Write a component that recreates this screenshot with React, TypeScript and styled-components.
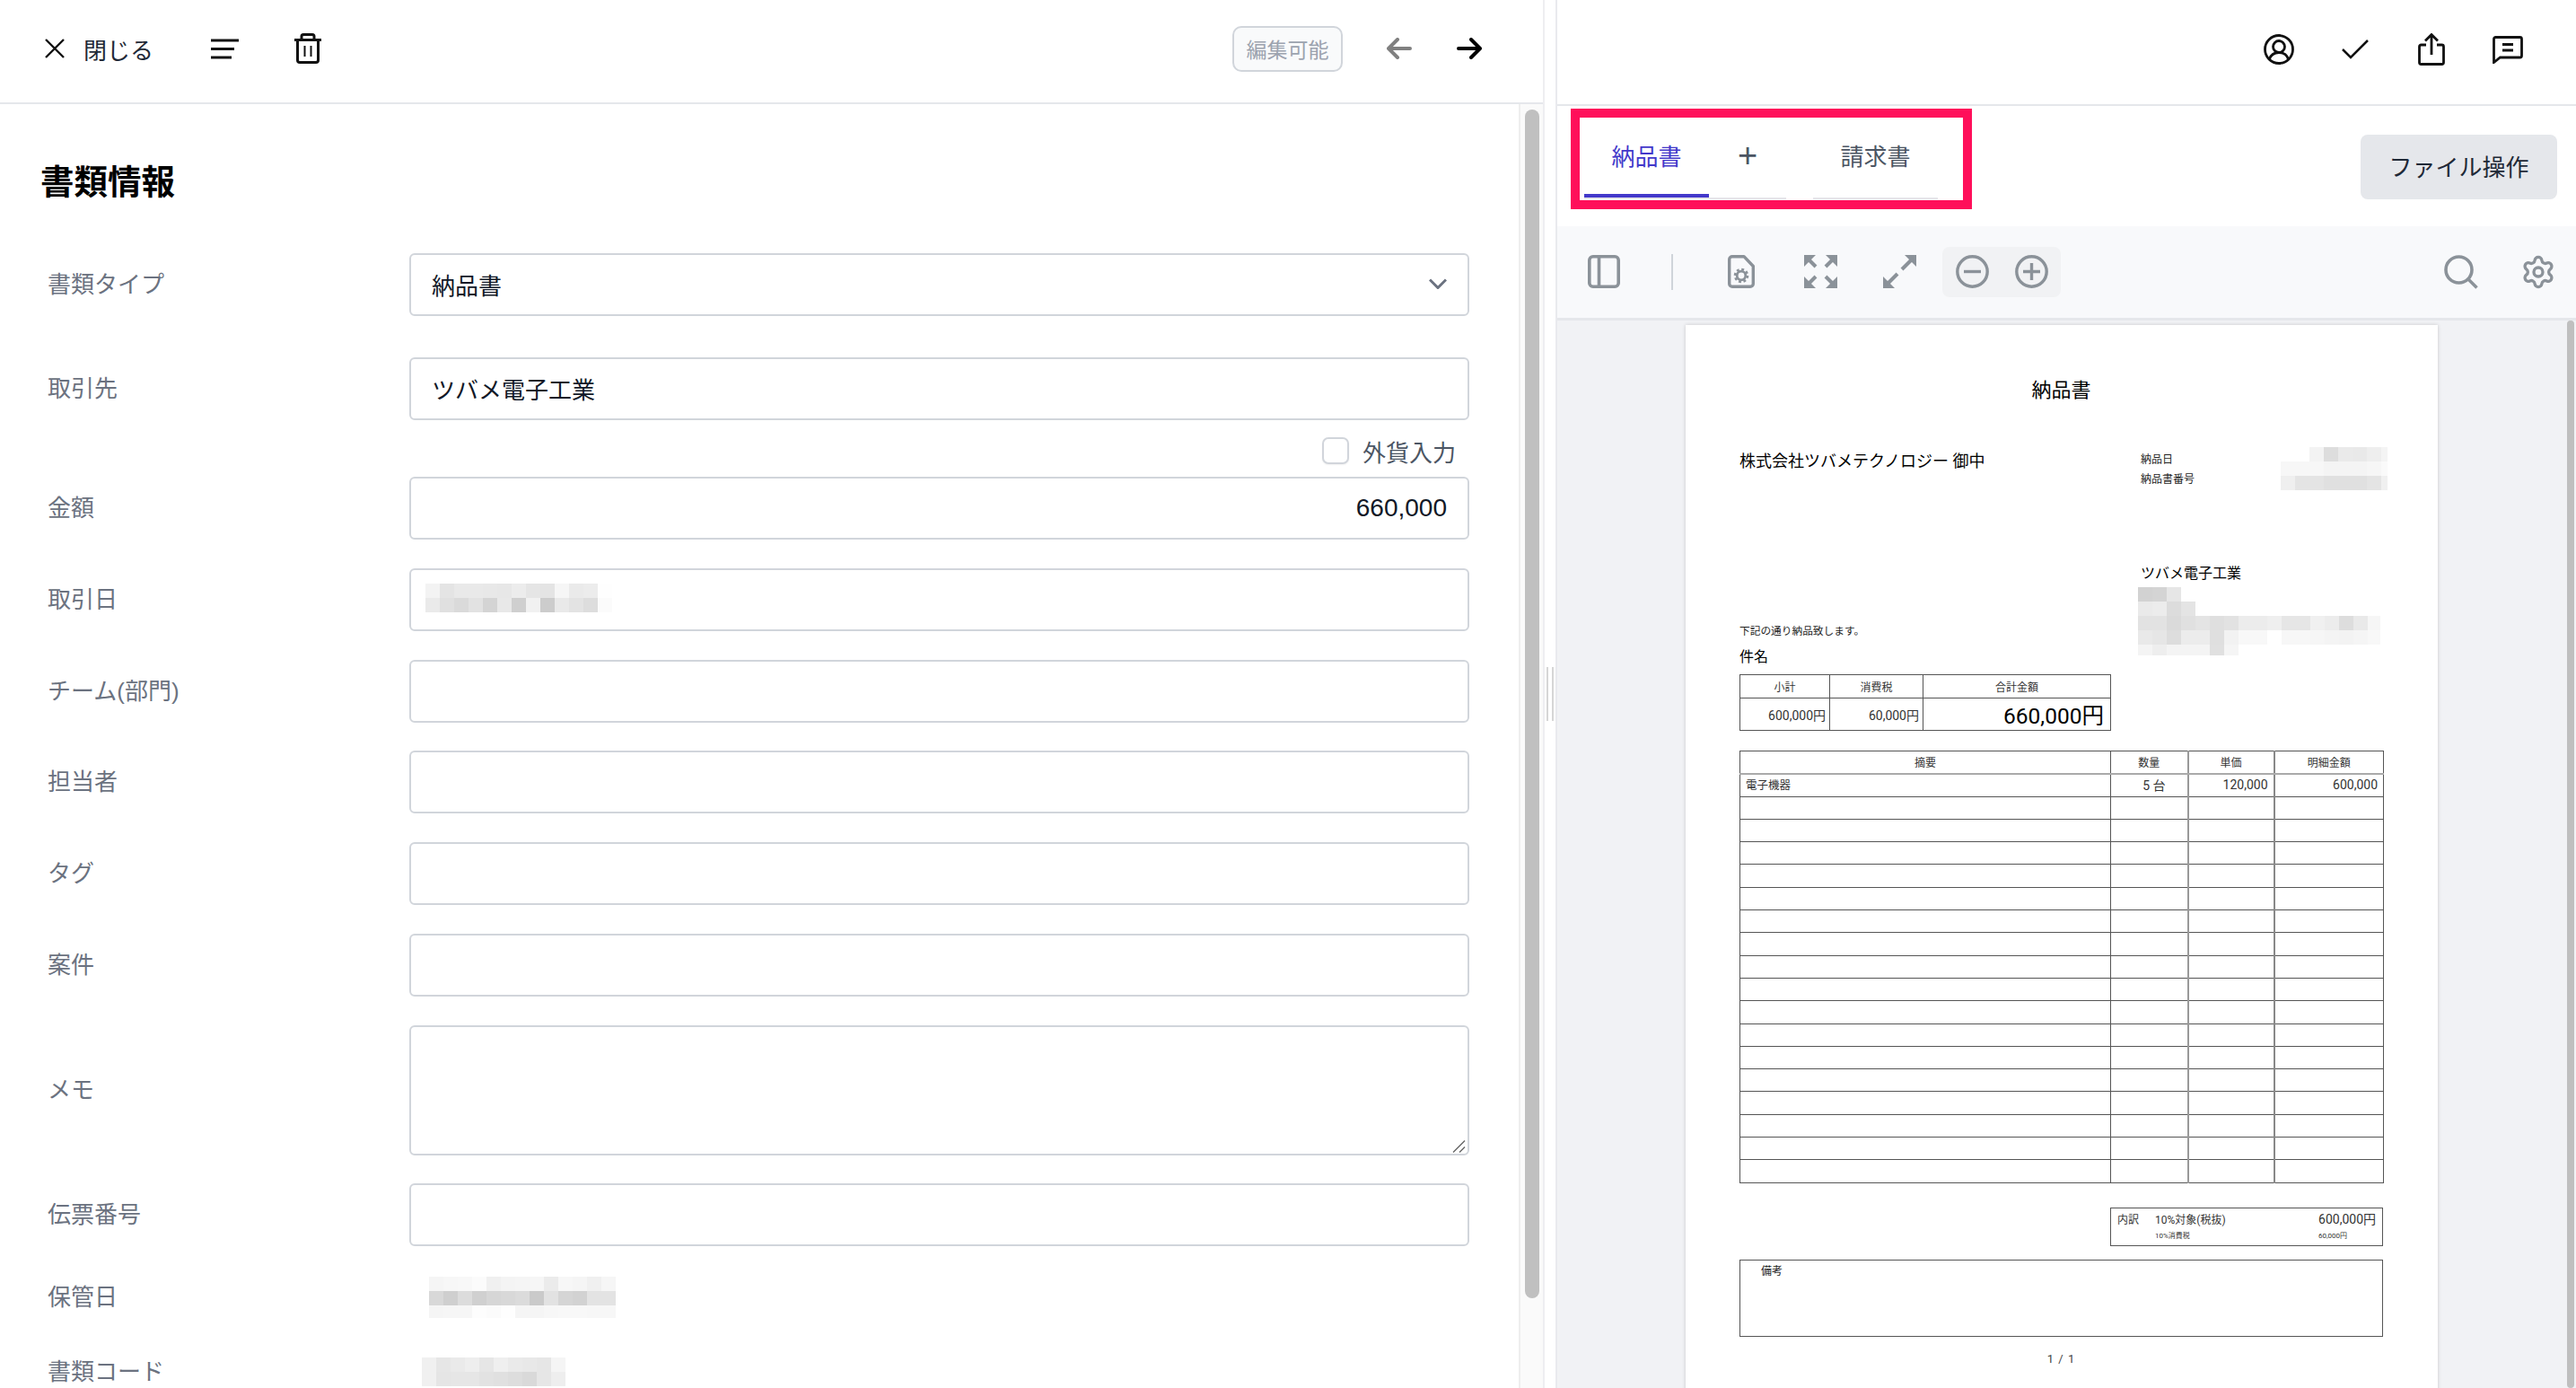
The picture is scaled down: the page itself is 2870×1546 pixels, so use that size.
import * as React from 'react';
import styled, { createGlobalStyle } from 'styled-components';
import { Settings } from 'lucide-react';

const GlobalStyle = createGlobalStyle`
  html, body {
    margin: 0;
    padding: 0;
    background: #fff;
  }
  body {
    font-family: "Liberation Sans", "Noto Sans CJK JP", sans-serif;
    color: #111827;
  }
  * {
    box-sizing: border-box;
  }
`;

// gray levels of the pixelated (masked) parts, ff = nothing there
const DATE_CELLS = [
  'f3 e4 e9 e9 e8 e7 ec e5 e4 f6 ea ec fe',
  'ea e0 da e2 d4 e8 cf f1 cc e9 e3 dd fb',
];
const STORED_CELLS = [
  'f5 f7 f8 fb f0 f4 f5 f6 eb f7 f5 f0 f6',
  'd8 cf dc d0 d6 d8 db ca e2 d5 d2 e3 e3',
  'f5 f6 f6 fd fb fe f5 f5 f7 f8 f8 f7 f7',
];
const CODE_CELLS = [
  'f0 e6 ea ee e6 ef ea e8 e6 f5',
  'f0 e5 e6 e6 e2 e0 dd d9 e6 ee',
];
const DOC_META_CELLS = [
  'ff ff f3 dd ea e9 ee f4',
  'f7 f7 f7 f4 f4 f4 f6 fa',
  'ef e4 e4 e0 e0 e0 e4 f0',
];
const DOC_ADDRESS_CELLS = [
  'd2 d4 e6 ff ff ff ff ff ff ff ff ff ff ff ff ff ff',
  'ea ec dc e4 ff ff ff ff ff ff ff ff ff ff ff ff ff',
  'e2 e2 da e0 e4 df e2 ec ec ef e6 e6 f0 ec dd e9 f6',
  'e9 e6 dd ec ec df f2 f8 f8 ff f7 f7 f6 f4 f3 f5 f8',
  'f4 ee f4 f4 f4 e0 f5 ff ff ff ff ff ff ff ff ff ff',
];

const Mosaic = ({ rows, width, height }: { rows: string[]; width?: number; height?: number }) => {
  const cells = rows.map((r) => r.split(' '));
  return (
    <svg
      width={width ?? cells[0].length * 16}
      height={height ?? cells.length * 16}
      shapeRendering='crispEdges'
      style={{ display: 'block' }}
    >
      {cells.map((row, y) =>
        row.map((c, x) =>
          c === 'ff' ? null : <rect key={`${x}-${y}`} x={x * 16} y={y * 16} width='16' height='16' fill={`#${c}${c}${c}`} />
        )
      )}
    </svg>
  );
};

const CloseIcon = () => (
  <svg width='22' height='22' viewBox='0 0 22 22' fill='none' stroke='#111' strokeWidth='2.4'>
    <path d='M1 1l20 20M21 1L1 21' />
  </svg>
);

const MenuIcon = () => (
  <svg width='31' height='23' viewBox='0 0 31 23' fill='none' stroke='#111' strokeWidth='3'>
    <path d='M0 2h31M0 11.500h26M0 21h23' />
  </svg>
);

const TrashIcon = () => (
  <svg width='30' height='34' viewBox='0 0 30 34' fill='none' stroke='#111' strokeWidth='3'>
    <path d='M0 7.500h30M8 7V3.500A2 2 0 0 1 10 1.500h10a2 2 0 0 1 2 2V7' />
    <path d='M3.500 8v22a2.500 2.500 0 0 0 2.500 2.500h18a2.500 2.500 0 0 0 2.500-2.500V8' />
    <path d='M11.500 14v12M18.500 14v12' strokeWidth='2' />
  </svg>
);

const ArrowIcon = ({ left, color }: { left?: boolean; color: string }) => (
  <svg width='28' height='24' viewBox='0 0 28 24' fill='none' stroke={color} strokeWidth='4' strokeLinecap='round' strokeLinejoin='round'>
    {left ? <path d='M26 12H3M12 2L2 12l10 10' /> : <path d='M2 12h23M16 2l10 10-10 10' />}
  </svg>
);

const ChevronIcon = () => (
  <svg width='20' height='12' viewBox='0 0 20 12' fill='none' stroke='#6b7280' strokeWidth='3'>
    <path d='M1 1.500l9 9 9-9' />
  </svg>
);

const ResizeGrip = () => (
  <svg width='15' height='14' viewBox='0 0 15 14' fill='none' stroke='#666' strokeWidth='1.400'>
    <path d='M1 13.500L14 .5M8 13.500L14 7.500' />
  </svg>
);

const UserIcon = () => (
  <svg width='34' height='34' viewBox='0 0 34 34' fill='none' stroke='#111' strokeWidth='2.800'>
    <circle cx='17' cy='17' r='15.500' />
    <circle cx='17' cy='14' r='6.500' />
    <path d='M6.500 28c1.500-5 5-7.500 10.500-7.500S26 23 27.500 28' />
  </svg>
);

const CheckIcon = () => (
  <svg width='30' height='22' viewBox='0 0 30 22' fill='none' stroke='#111' strokeWidth='2.500'>
    <path d='M1 11l9 9L29 1' />
  </svg>
);

const ShareIcon = () => (
  <svg width='30' height='36' viewBox='0 0 30 36' fill='none' stroke='#111' strokeWidth='2.800'>
    <path d='M9 13H3.500A2 2 0 0 0 1.500 15v17.500a2 2 0 0 0 2 2h23a2 2 0 0 0 2-2V15a2 2 0 0 0-2-2H21' />
    <path d='M15 24V2M8 8.500L15 1.500l7 7' />
  </svg>
);

const ChatIcon = () => (
  <svg width='34' height='31' viewBox='0 0 34 31' fill='none' stroke='#111' strokeWidth='2.800'>
    <path d='M3.500 1.500h27a2 2 0 0 1 2 2V22a2 2 0 0 1-2 2H8.500L1.500 29.500V3.500a2 2 0 0 1 2-2z' />
    <path d='M11 9.500h12M11 16h12' />
  </svg>
);

const SidebarIcon = () => (
  <svg width='36' height='37' viewBox='0 0 36 37' fill='none' stroke='#8b9299' strokeWidth='3.600'>
    <rect x='1.800' y='1.800' width='32.400' height='33.400' rx='4' />
    <path d='M12.500 2v33' />
  </svg>
);

const DocGearIcon = () => (
  <svg width='30' height='37' viewBox='0 0 30 37' fill='none' stroke='#8b9299' strokeWidth='3.400'>
    <path d='M18 1.700H5A3.300 3.300 0 0 0 1.700 5v27A3.300 3.300 0 0 0 5 35.300h20a3.300 3.300 0 0 0 3.300-3.300V12.500z' strokeLinejoin='round' />
    <circle cx='15' cy='23' r='4.800' strokeWidth='2.800' />
    <circle cx='15' cy='23' r='7' strokeWidth='2.600' strokeDasharray='2.900 2.600' />
  </svg>
);

const Corner = ({ transform, stem }: { transform?: string; stem: number }) => (
  <g transform={transform}>
    <path d='M0 0H13L0 13Z' fill='#8b9299' />
    <path d={`M4 4L${stem} ${stem}`} stroke='#8b9299' strokeWidth='4' />
  </g>
);

const FitIcon = () => (
  <svg width='37' height='37' viewBox='0 0 37 37' fill='none'>
    <Corner stem={13} />
    <Corner stem={13} transform='translate(37 0) scale(-1 1)' />
    <Corner stem={13} transform='translate(0 37) scale(1 -1)' />
    <Corner stem={13} transform='translate(37 37) scale(-1 -1)' />
  </svg>
);

const ExpandIcon = () => (
  <svg width='37' height='37' viewBox='0 0 37 37' fill='none'>
    <Corner stem={16} transform='translate(37 0) scale(-1 1)' />
    <Corner stem={16} transform='translate(0 37) scale(1 -1)' />
  </svg>
);

const ZoomIcon = ({ plus }: { plus?: boolean }) => (
  <svg width='37' height='37' viewBox='0 0 37 37' fill='none' stroke='#8b9299' strokeWidth='3.400'>
    <circle cx='18.500' cy='18.500' r='16.700' />
    <path d={plus ? 'M9 18.500h19M18.500 9v19' : 'M9 18.500h19'} />
  </svg>
);

const SearchIcon = () => (
  <svg width='38' height='38' viewBox='0 0 38 38' fill='none' stroke='#8b9299' strokeWidth='3.600'>
    <circle cx='16.500' cy='16.500' r='14.500' />
    <path d='M27 27l9.500 9.500' />
  </svg>
);

const Shell = styled.div`
  display: flex;
  width: 100vw;
  height: 100vh;
  overflow: hidden;
`;

const LeftPanel = styled.section`
  display: flex;
  flex-direction: column;
  width: 1721px;
  flex: none;
  border-right: 2px solid #eeeef1;
`;

const TopBar = styled.header`
  display: flex;
  align-items: center;
  height: 116px;
  flex: none;
  padding: 0 43px 6px 50px;
  border-bottom: 2px solid #e5e7eb;
`;

const CloseButton = styled.div`
  display: flex;
  align-items: center;
  gap: 21px;
  font-size: 26px;
  color: #1f2937;
`;

const BarIcon = styled.div<{ $left: number }>`
  display: flex;
  margin-left: ${(p) => p.$left}px;
`;

const EditBadge = styled.div`
  display: flex;
  align-items: center;
  justify-content: center;
  width: 123px;
  height: 51px;
  margin-left: auto;
  margin-right: 24px;
  font-size: 23px;
  color: #9ca3af;
  background: #f9fafb;
  border: 2px solid #d1d5db;
  border-radius: 10px;
`;

const ArrowButton = styled.div`
  display: flex;
  align-items: center;
  justify-content: center;
  width: 78px;
`;

const LeftBody = styled.div`
  display: flex;
  flex: 1;
  min-height: 0;
`;

const Form = styled.div`
  flex: 1;
  min-width: 0;
  overflow: hidden;
  padding: 57px 55px 0 46px;
`;

const Title = styled.h1`
  margin: 0 0 49px -1px;
  font-size: 37.500px;
  line-height: 60px;
  font-weight: 700;
  color: #000;
`;

const Row = styled.div<{ $top?: number }>`
  display: grid;
  grid-template-columns: 410px 1fr;
  align-items: center;
  margin-top: ${(p) => p.$top ?? 31.8}px;
`;

const Label = styled.div`
  padding-left: 7px;
  font-size: 26px;
  line-height: 32px;
  color: #6b7280;
`;

const Field = styled.div<{ $height?: number; $amount?: boolean }>`
  position: relative;
  display: flex;
  align-items: center;
  justify-content: ${(p) => (p.$amount ? 'flex-end' : 'space-between')};
  height: ${(p) => p.$height ?? 70}px;
  padding: 0 23px ${(p) => (p.$amount ? 0 : 2)}px;
  font-size: ${(p) => (p.$amount ? 28 : 26)}px;
  color: #111827;
  background: #fff;
  border: 2px solid #d1d5db;
  border-radius: 6px;
`;

const FieldMosaic = styled.div`
  margin: -2px 0 0 -7px;
`;

const GripSlot = styled.div`
  position: absolute;
  right: 2px;
  bottom: 1px;
  display: flex;
`;

const PlainValue = styled.div<{ $indent: number }>`
  padding-left: ${(p) => p.$indent}px;
`;

const CheckRow = styled.div`
  display: flex;
  align-items: center;
  justify-content: flex-end;
  gap: 15px;
  height: 63px;
  padding: 5px 15px 0 0;
  font-size: 26px;
  color: #4b5563;
`;

const CheckBox = styled.span`
  width: 30px;
  height: 30px;
  background: #fff;
  border: 2px solid #d1d5db;
  border-radius: 7px;
  box-shadow: 0 1px 2px rgba(0, 0, 0, 0.06);
`;

const ScrollTrack = styled.div`
  flex: none;
  width: 27px;
  padding: 6px 0 0 5px;
  background: #fafafa;
  border-left: 2px solid #eeeeee;
`;

const ScrollThumb = styled.div`
  width: 16px;
  height: 1324px;
  background: #c0c0c0;
  border-radius: 8px;
`;

const Splitter = styled.div`
  flex: none;
  display: flex;
  align-items: center;
  justify-content: center;
  gap: 4px;
  width: 12px;
  background: #fff;
`;

const SplitBar = styled.span`
  width: 2px;
  height: 60px;
  background: #d6d6d6;
`;

const RightPanel = styled.section`
  flex: 1;
  min-width: 0;
  display: flex;
  flex-direction: column;
  border-left: 2px solid #e9eaee;
`;

const ActionBar = styled.header`
  flex: none;
  display: flex;
  align-items: center;
  justify-content: flex-end;
  height: 118px;
  padding-right: 34px;
  border-bottom: 2px solid #e5e7eb;
`;

const ActionButton = styled.div`
  display: flex;
  align-items: center;
  justify-content: center;
  width: 85px;
  margin-top: -6px;
`;

const TabBar = styled.div`
  flex: none;
  display: flex;
  justify-content: space-between;
  height: 134px;
  padding: 3px 21px 0 15px;
`;

const TabHighlight = styled.div`
  display: flex;
  width: 447px;
  height: 112px;
  padding: 0 0 1px 5px;
  border: 10px solid #ff0f5a;
`;

const Tab = styled.div<{ $active?: boolean; $width: number; $gap?: number }>`
  display: flex;
  align-items: center;
  justify-content: center;
  width: ${(p) => p.$width}px;
  margin-left: ${(p) => p.$gap ?? 0}px;
  padding-bottom: 6px;
  font-size: 26px;
  color: ${(p) => (p.$active ? '#4338ca' : '#4b5563')};
  border-bottom: 2px solid #e5e7eb;
  box-shadow: ${(p) => (p.$active ? 'inset 0 -4px 0 #4338ca' : 'none')};
`;

const AddTab = styled(Tab)`
  font-size: 38px;
  line-height: 1;
  font-weight: 400;
  color: #4b5563;
`;

const FileButton = styled.div`
  display: flex;
  align-items: center;
  justify-content: center;
  width: 219px;
  height: 72px;
  margin-top: 29px;
  padding-bottom: 4px;
  font-size: 26px;
  color: #1f2937;
  background: #e5e7eb;
  border-radius: 8px;
`;

const Toolbar = styled.div`
  flex: none;
  display: flex;
  align-items: center;
  height: 105px;
  padding: 0 0 1px 8px;
  background: #f8f9fb;
  border-bottom: 3px solid #e5e7eb;
`;

const ToolButton = styled.div<{ $width?: number }>`
  display: flex;
  align-items: center;
  justify-content: center;
  width: ${(p) => p.$width ?? 88}px;
`;

const ToolSeparator = styled.span`
  width: 2px;
  height: 40px;
  margin: 0 32px 0 31px;
  background: #cfd4da;
`;

const ZoomGroup = styled.div`
  display: flex;
  align-items: center;
  width: 132px;
  height: 56px;
  margin-left: 4px;
  background: #f1f2f4;
  border-radius: 8px;
`;

const ToolSpacer = styled.div`
  flex: 1;
`;

const Viewer = styled.div`
  position: relative;
  flex: 1;
  min-height: 0;
  overflow: hidden;
  padding: 5px 0 0 143px;
  background: #f1f2f5;
`;

const ViewerThumb = styled.div`
  position: absolute;
  top: 0;
  bottom: 0;
  right: 2px;
  width: 8px;
  background: #bfbfbf;
  border-radius: 4px;
`;

const Page = styled.div`
  width: 838px;
  height: 1320px;
  padding: 58px 0 0 60px;
  font-family: Roboto, "Noto Sans CJK JP", sans-serif;
  color: #222;
  background: #fff;
  box-shadow: 0 0 4px rgba(0, 0, 0, 0.18);
`;

const DocTitle = styled.div`
  width: 717px;
  font-size: 22px;
  line-height: 30px;
  text-align: center;
  color: #000;
`;

const DocHead = styled.div`
  display: grid;
  grid-template-columns: 447px 1fr;
  height: 316px;
  margin-top: 48px;
`;

const DocLeft = styled.div`
  display: flex;
  flex-direction: column;
`;

const Addressee = styled.div`
  margin-top: 4px;
  font-size: 18px;
  line-height: 24px;
  color: #000;
`;

const Notice = styled.div`
  margin-top: auto;
  font-size: 11.700px;
  line-height: 16px;
`;

const Subject = styled.div`
  margin: 10px 0 8px;
  font-size: 16px;
  line-height: 22px;
  color: #000;
`;

const Sheet = styled.table`
  table-layout: fixed;
  border-collapse: collapse;
  font-size: 14px;
  color: #333;

  td, th {
    padding: 0;
    font-weight: 400;
    border: 1px solid #555;
  }
`;

const SummaryTable = styled(Sheet)`
  width: 413px;
  height: 61px;

  th {
    height: 26px;
    font-size: 12px;
    text-align: center;
  }
  td {
    padding-right: 4px;
    text-align: right;
  }
  td:last-child {
    padding-right: 7px;
    font-size: 24.500px;
    color: #000;
  }
`;

const LinesTable = styled(Sheet)`
  width: 717px;
  margin-top: 22px;

  th {
    height: 25.300px;
    font-size: 12px;
    text-align: center;
    border-bottom: 2px solid #aaa;
  }
  td {
    height: 25.300px;
    padding: 0 6px 2px;
    text-align: right;
  }
  td:first-child {
    font-size: 12.500px;
    text-align: left;
  }
  td:nth-child(2) {
    padding-right: 24px;
  }
  td:nth-child(3), th:nth-child(3) {
    border-left: 2px solid #999;
  }
  td:nth-child(4), th:nth-child(4) {
    border-left: 2px solid #888;
  }
`;

const DocMeta = styled.div`
  display: flex;
  height: 48px;
`;

const MetaLabels = styled.div`
  width: 156px;
  padding-top: 3px;
  font-size: 12px;
  line-height: 22px;
`;

const IssuerName = styled.div`
  margin: 83px 0 5px;
  font-size: 16px;
  line-height: 20px;
  color: #000;
`;

const AddressMosaic = styled.div`
  margin-left: -3px;
`;

const Breakdown = styled.div`
  display: grid;
  grid-template-columns: 42px 1fr auto;
  grid-template-rows: 23px 14px;
  align-items: center;
  width: 304px;
  height: 43px;
  margin: 27px 0 0 413px;
  padding: 0 7px;
  font-size: 12px;
  color: #333;
  border: 1px solid #555;
`;

const BreakdownAmount = styled.span`
  font-size: 14px;
`;

const BreakdownSmall = styled.span<{ $col: number }>`
  grid-column: ${(p) => p.$col};
  font-size: 8px;
`;

const Remarks = styled.div`
  width: 717px;
  height: 86px;
  margin-top: 15px;
  padding: 2px 23px;
  font-size: 12px;
  border: 1px solid #555;
`;

const PageNumber = styled.div`
  width: 717px;
  margin-top: 18px;
  font-size: 13px;
  line-height: 14px;
  letter-spacing: 1px;
  text-align: center;
  color: #444;
`;

const FORM_ROWS = ['チーム(部門)', '担当者', 'タグ', '案件'];

export default function App() {
  return (
    <Shell>
      <GlobalStyle />
      <LeftPanel>
        <TopBar>
          <CloseButton>
            <CloseIcon />
            閉じる
          </CloseButton>
          <BarIcon $left={64}>
            <MenuIcon />
          </BarIcon>
          <BarIcon $left={62}>
            <TrashIcon />
          </BarIcon>
          <EditBadge>編集可能</EditBadge>
          <ArrowButton>
            <ArrowIcon left color='#808080' />
          </ArrowButton>
          <ArrowButton>
            <ArrowIcon color='#000' />
          </ArrowButton>
        </TopBar>
        <LeftBody>
          <Form>
            <Title>書類情報</Title>
            <Row $top={0}>
              <Label>書類タイプ</Label>
              <Field>
                納品書
                <ChevronIcon />
              </Field>
            </Row>
            <Row $top={46}>
              <Label>取引先</Label>
              <Field>ツバメ電子工業</Field>
            </Row>
            <CheckRow>
              <CheckBox />
              外貨入力
            </CheckRow>
            <Row $top={0}>
              <Label>金額</Label>
              <Field $amount>660,000</Field>
            </Row>
            <Row>
              <Label>取引日</Label>
              <Field>
                <FieldMosaic>
                  <Mosaic rows={DATE_CELLS} />
                </FieldMosaic>
              </Field>
            </Row>
            {FORM_ROWS.map((name) => (
              <Row key={name}>
                <Label>{name}</Label>
                <Field />
              </Row>
            ))}
            <Row>
              <Label>メモ</Label>
              <Field $height={145}>
                <GripSlot>
                  <ResizeGrip />
                </GripSlot>
              </Field>
            </Row>
            <Row $top={31}>
              <Label>伝票番号</Label>
              <Field />
            </Row>
            <Row $top={34}>
              <Label>保管日</Label>
              <PlainValue $indent={22}>
                <Mosaic rows={STORED_CELLS} height={46} />
              </PlainValue>
            </Row>
            <Row $top={44}>
              <Label>書類コード</Label>
              <PlainValue $indent={14}>
                <Mosaic rows={CODE_CELLS} />
              </PlainValue>
            </Row>
          </Form>
          <ScrollTrack>
            <ScrollThumb />
          </ScrollTrack>
        </LeftBody>
      </LeftPanel>

      <Splitter>
        <SplitBar />
        <SplitBar />
      </Splitter>

      <RightPanel>
        <ActionBar>
          <ActionButton>
            <UserIcon />
          </ActionButton>
          <ActionButton>
            <CheckIcon />
          </ActionButton>
          <ActionButton>
            <ShareIcon />
          </ActionButton>
          <ActionButton>
            <ChatIcon />
          </ActionButton>
        </ActionBar>
        <TabBar>
          <TabHighlight>
            <Tab $active $width={139}>
              納品書
            </Tab>
            <AddTab $width={86}>+</AddTab>
            <Tab $width={139} $gap={30}>
              請求書
            </Tab>
          </TabHighlight>
          <FileButton>ファイル操作</FileButton>
        </TabBar>
        <Toolbar>
          <ToolButton>
            <SidebarIcon />
          </ToolButton>
          <ToolSeparator />
          <ToolButton>
            <DocGearIcon />
          </ToolButton>
          <ToolButton>
            <FitIcon />
          </ToolButton>
          <ToolButton>
            <ExpandIcon />
          </ToolButton>
          <ZoomGroup>
            <ToolButton $width={66}>
              <ZoomIcon />
            </ToolButton>
            <ToolButton $width={66}>
              <ZoomIcon plus />
            </ToolButton>
          </ZoomGroup>
          <ToolSpacer />
          <ToolButton>
            <SearchIcon />
          </ToolButton>
          <ToolButton $width={84}>
            <Settings size={40} color='#8b9299' strokeWidth={2} />
          </ToolButton>
        </Toolbar>
        <Viewer>
          <Page>
            <DocTitle>納品書</DocTitle>
            <DocHead>
              <DocLeft>
                <Addressee>株式会社ツバメテクノロジー 御中</Addressee>
                <Notice>下記の通り納品致します。</Notice>
                <Subject>件名</Subject>
                <SummaryTable>
                  <colgroup>
                    <col width='100' />
                    <col width='104' />
                    <col width='209' />
                  </colgroup>
                  <thead>
                    <tr>
                      <th>小計</th>
                      <th>消費税</th>
                      <th>合計金額</th>
                    </tr>
                  </thead>
                  <tbody>
                    <tr>
                      <td>600,000円</td>
                      <td>60,000円</td>
                      <td>660,000円</td>
                    </tr>
                  </tbody>
                </SummaryTable>
              </DocLeft>
              <div>
                <DocMeta>
                  <MetaLabels>
                    <div>納品日</div>
                    <div>納品書番号</div>
                  </MetaLabels>
                  <Mosaic rows={DOC_META_CELLS} width={119} />
                </DocMeta>
                <IssuerName>ツバメ電子工業</IssuerName>
                <AddressMosaic>
                  <Mosaic rows={DOC_ADDRESS_CELLS} width={270} height={76} />
                </AddressMosaic>
              </div>
            </DocHead>
            <LinesTable>
              <colgroup>
                <col width='413' />
                <col width='86' />
                <col width='96' />
                <col width='122' />
              </colgroup>
              <thead>
                <tr>
                  <th>摘要</th>
                  <th>数量</th>
                  <th>単価</th>
                  <th>明細金額</th>
                </tr>
              </thead>
              <tbody>
                <tr>
                  <td>電子機器</td>
                  <td>5 台</td>
                  <td>120,000</td>
                  <td>600,000</td>
                </tr>
                {Array.from({ length: 17 }, (_, i) => (
                  <tr key={i}>
                    <td />
                    <td />
                    <td />
                    <td />
                  </tr>
                ))}
              </tbody>
            </LinesTable>
            <Breakdown>
              <span>内訳</span>
              <span>10%対象(税抜)</span>
              <BreakdownAmount>600,000円</BreakdownAmount>
              <BreakdownSmall $col={2}>10%消費税</BreakdownSmall>
              <BreakdownSmall $col={3}>60,000円</BreakdownSmall>
            </Breakdown>
            <Remarks>備考</Remarks>
            <PageNumber>1 / 1</PageNumber>
          </Page>
          <ViewerThumb />
        </Viewer>
      </RightPanel>
    </Shell>
  );
}
